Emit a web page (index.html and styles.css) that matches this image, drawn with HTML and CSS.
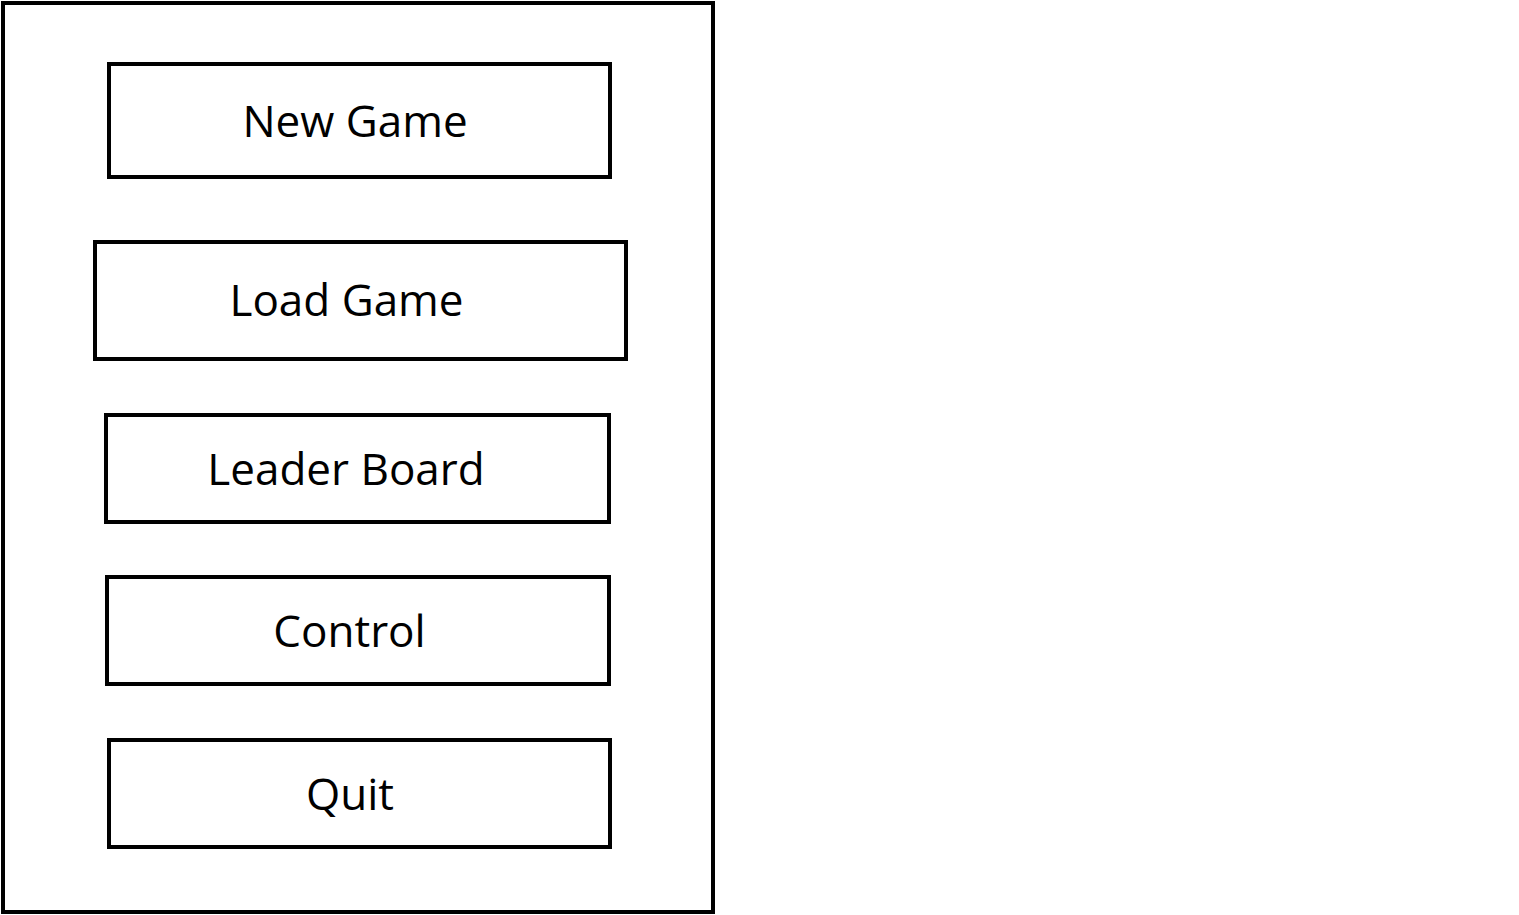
FILE: index.html
```html
<!DOCTYPE html>
<html lang="en">
<head>
<meta charset="utf-8">
<title>Main Menu</title>
<link rel="stylesheet" href="styles.css">
</head>
<body>
<div class="frame">
  <div class="menu-btn btn-new">New Game</div>
  <div class="menu-btn btn-load">Load Game</div>
  <div class="menu-btn btn-leader">Leader Board</div>
  <div class="menu-btn btn-control">Control</div>
  <div class="menu-btn btn-quit">Quit</div>
</div>
</body>
</html>
```

FILE: styles.css
```css
html, body {
  margin: 0;
  padding: 0;
  background: #fff;
}

body {
  font-family: "Open Sans", "Noto Sans", sans-serif;
  color: #000;
}

.frame {
  box-sizing: border-box;
  margin: 1px 0 0 1px;
  width: 714px;
  height: 913px;
  border: 4px solid #000;
  display: flex;
  flex-direction: column;
  align-items: flex-start;
}

.menu-btn {
  box-sizing: border-box;
  border: 4px solid #000;
  display: flex;
  align-items: center;
  justify-content: center;
  font-size: 44px;
  line-height: 1;
  padding-bottom: 2px;
}

.btn-new {
  margin: 57px 0 0 102px;
  width: 505px;
  height: 117px;
  padding-right: 9px;
}

.btn-load {
  margin: 61px 0 0 88px;
  width: 535px;
  height: 121px;
  padding-right: 28px;
  padding-bottom: 4px;
}

.btn-leader {
  margin: 52px 0 0 99px;
  width: 507px;
  height: 111px;
  padding-right: 23px;
}

.btn-control {
  margin: 51px 0 0 100px;
  width: 506px;
  height: 111px;
  padding-right: 17px;
}

.btn-quit {
  margin: 52px 0 0 102px;
  width: 505px;
  height: 111px;
  padding-right: 19px;
}
```
